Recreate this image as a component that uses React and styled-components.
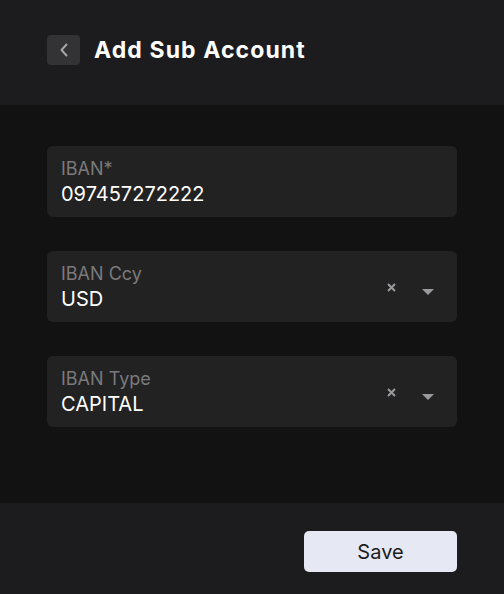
import React from 'react'
import styled, { createGlobalStyle } from 'styled-components'

const Global = createGlobalStyle`
  html, body {
    margin: 0;
    padding: 0;
    background: #121212;
  }
  body {
    font-family: 'Inter', 'Liberation Sans', sans-serif;
  }
`

const fields = [
  { label: 'IBAN*', value: '097457272222', select: false },
  { label: 'IBAN Ccy', value: 'USD', select: true },
  { label: 'IBAN Type', value: 'CAPITAL', select: true },
]

const App = () => (
  <Page>
    <Global />
    <Header>
      <BackButton aria-label="back">
        <svg width="12" height="16" viewBox="0 0 12 16" fill="none">
          <path d="M8.5 2.5 L3.5 8 L8.5 13.5" stroke="#a8a8ac" strokeWidth="1.9" strokeLinecap="round" strokeLinejoin="round" />
        </svg>
      </BackButton>
      <Title>Add Sub Account</Title>
    </Header>
    <Body>
      {fields.map(f => (
        <Field key={f.label}>
          <FieldText>
            <Label>{f.label}</Label>
            <Value>{f.value}</Value>
          </FieldText>
          {f.select && (
            <Controls>
              <svg width="9" height="9" viewBox="0 0 9 9">
                <path d="M1 1 L8 8 M8 1 L1 8" stroke="#9a9a9e" strokeWidth="2" />
              </svg>
              <Caret width="12" height="6" viewBox="0 0 12 6">
                <path d="M0 0 L12 0 L6 6 Z" fill="#9a9a9e" />
              </Caret>
            </Controls>
          )}
        </Field>
      ))}
    </Body>
    <Footer>
      <SaveButton>Save</SaveButton>
    </Footer>
  </Page>
)

export default App

const Page = styled.div`
  width: 504px;
  height: 594px;
  display: flex;
  flex-direction: column;
  background: #121212;
  color: #fff;
`

const Header = styled.div`
  height: 105px;
  background: #1c1c1e;
  display: flex;
  align-items: center;
  gap: 14px;
  padding: 0 47px 6px;
  box-sizing: border-box;
`

const BackButton = styled.button`
  width: 33px;
  height: 30px;
  border: none;
  border-radius: 4px;
  background: #333336;
  display: flex;
  align-items: center;
  justify-content: center;
  padding: 0;
`

const Title = styled.h1`
  margin: 0;
  font-size: 23px;
  font-weight: 700;
  color: #fff;
  letter-spacing: 1.1px;
`

const Body = styled.div`
  flex: 1;
  display: flex;
  flex-direction: column;
  gap: 34px;
  padding: 41px 47px 0;
`

const Field = styled.div`
  height: 71px;
  background: #222222;
  border-radius: 6px;
  display: flex;
  align-items: center;
  padding: 0 23px 0 14px;
  box-sizing: border-box;
`

const FieldText = styled.div`
  flex: 1;
  display: flex;
  flex-direction: column;
  gap: 2px;
  padding-top: 2px;
`

const Label = styled.span`
  font-size: 18px;
  color: #7a7a7c;
  line-height: 22px;
`

const Value = styled.span`
  font-size: 20px;
  color: #fff;
  line-height: 25px;
`

const Controls = styled.div`
  display: flex;
  align-items: flex-start;
  gap: 26px;
  margin-top: 5px;
`

const Caret = styled.svg`
  margin-top: 6px;
`

const Footer = styled.div`
  height: 91px;
  background: #1c1c1e;
  display: flex;
  align-items: center;
  justify-content: flex-end;
  padding: 6px 47px 0;
  box-sizing: border-box;
`

const SaveButton = styled.button`
  width: 153px;
  height: 41px;
  border: none;
  border-radius: 5px;
  background: #e6e8f4;
  color: #1c1c1e;
  font-family: 'Inter', 'Liberation Sans', sans-serif;
  font-size: 20px;
`
